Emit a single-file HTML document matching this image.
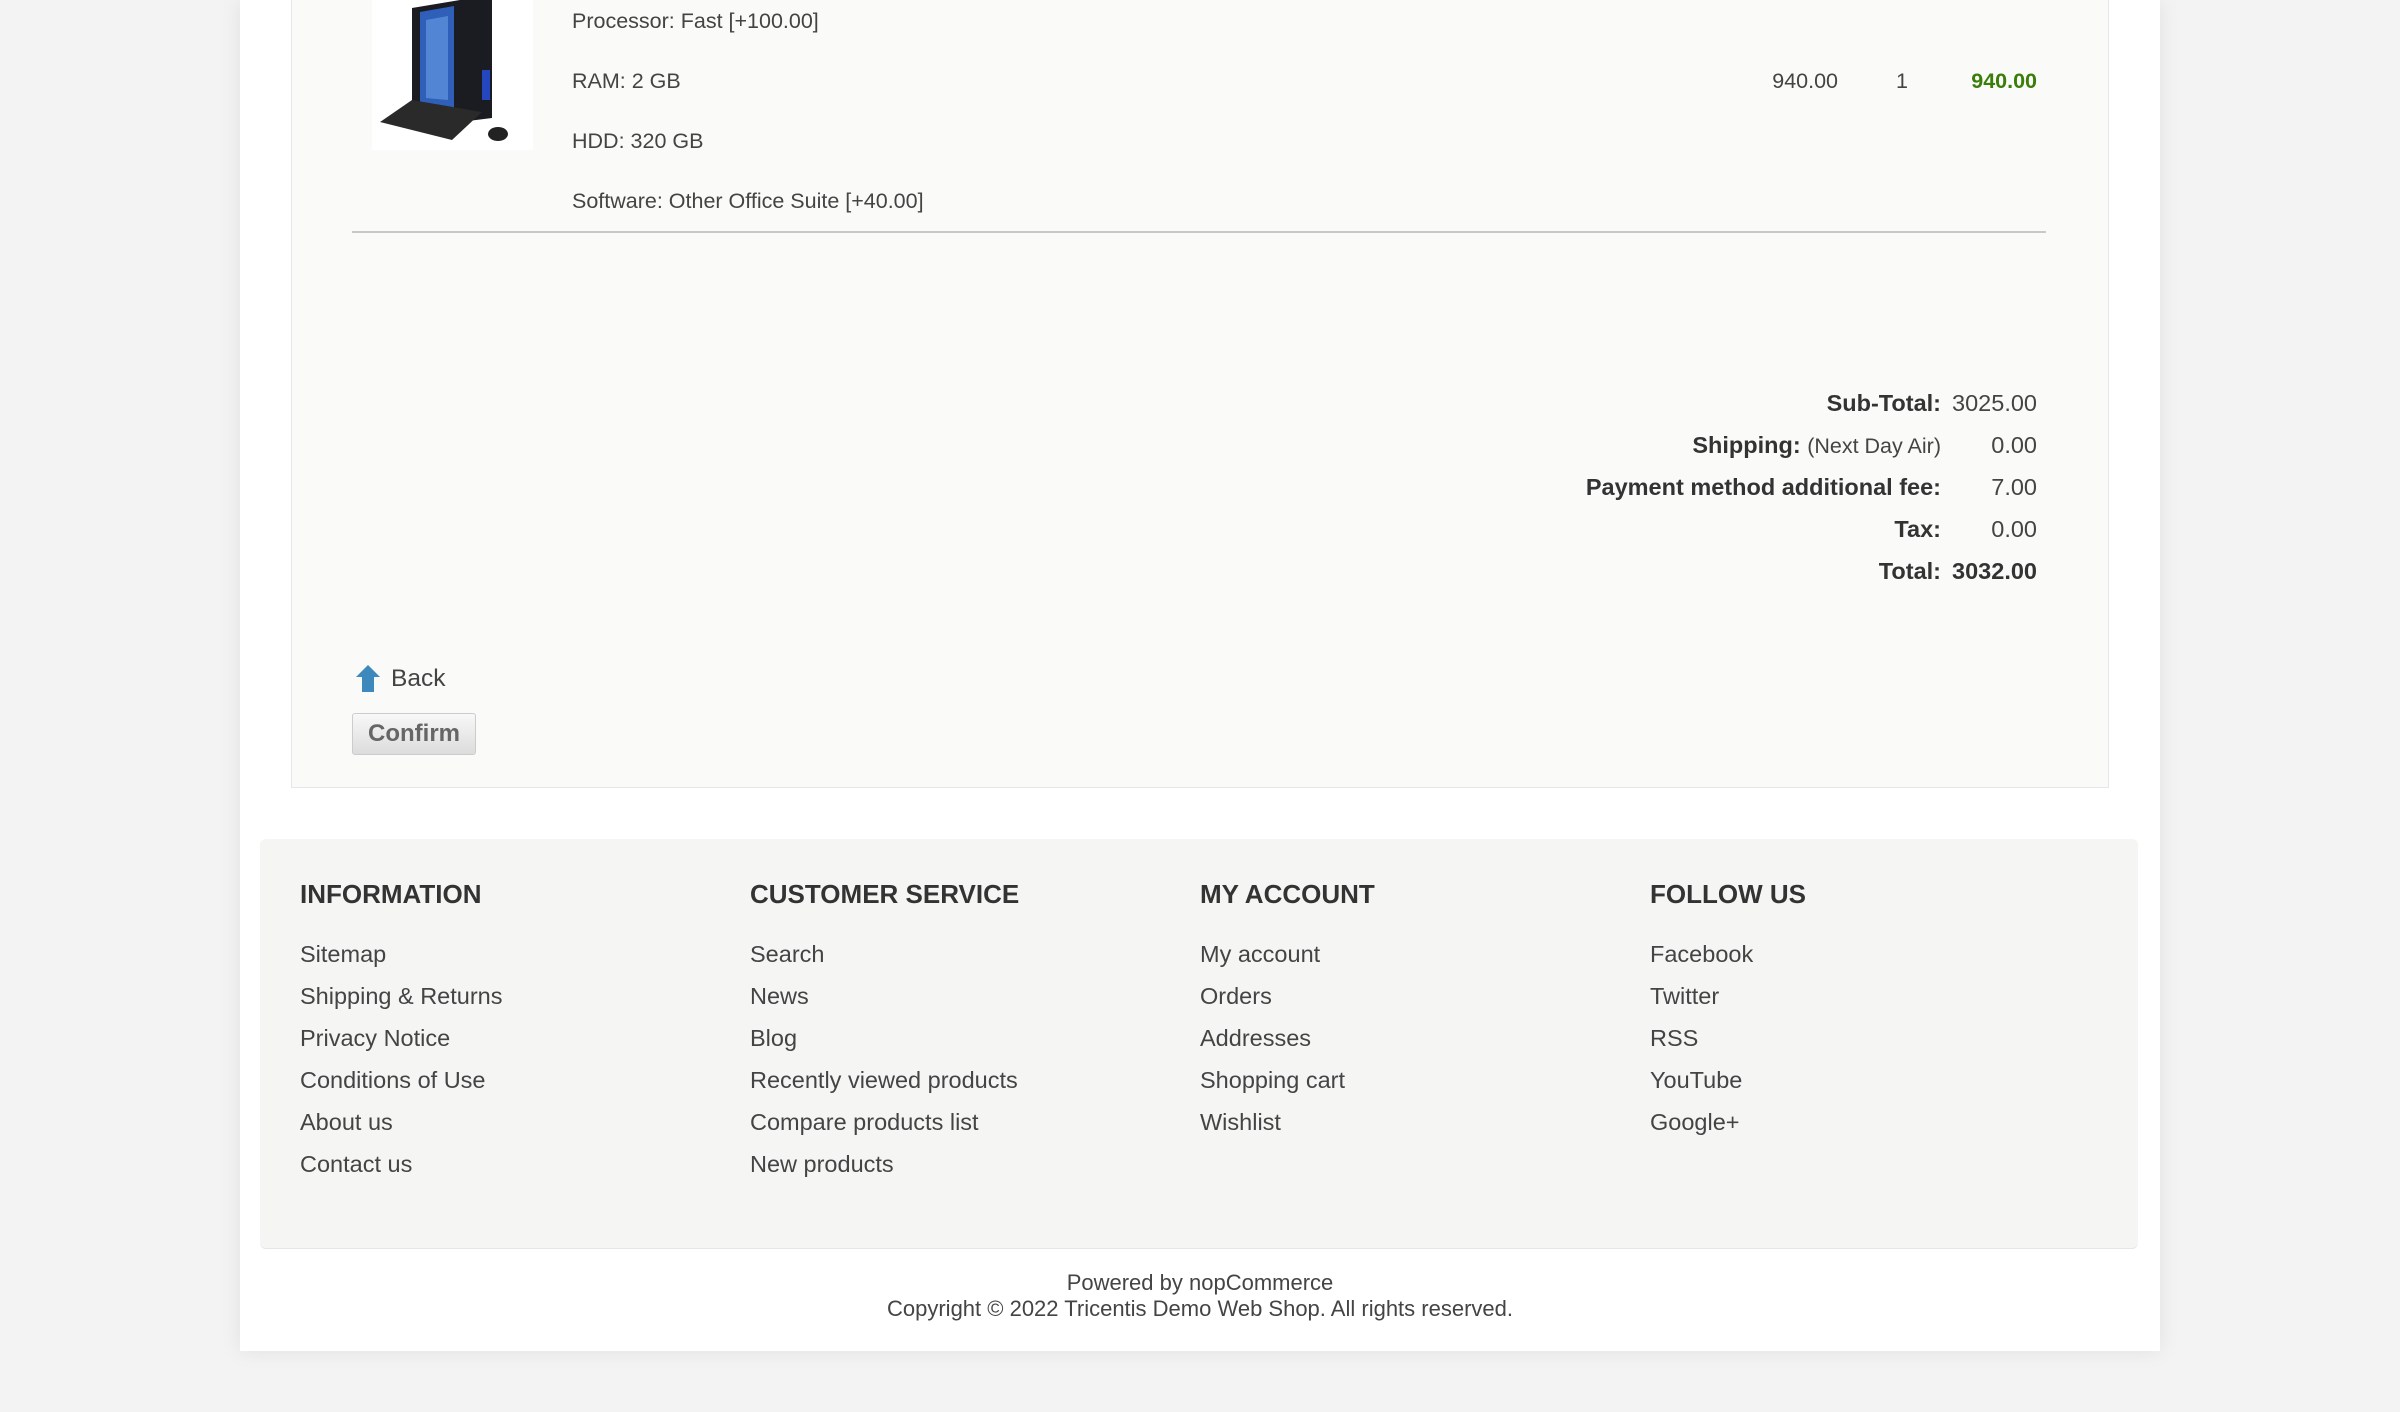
<!DOCTYPE html>
<html><head><meta charset="utf-8"><style>
*{margin:0;padding:0;box-sizing:border-box}
body{width:2400px;height:1412px;background:#f3f3f3;font-family:"Liberation Sans",Arial,sans-serif;color:#444;position:relative;overflow:hidden}
.a{position:absolute;white-space:nowrap}
#page{position:absolute;left:240px;top:0;width:1920px;height:1351px;background:#fff;box-shadow:0 0 20px rgba(0,0,0,.08)}
#box{position:absolute;left:291px;top:-2px;width:1818px;height:790px;background:#fafaf8;border:1px solid #e6e6e6}
.t{font-size:21.5px;line-height:24px}
.r{text-align:right}
.v{font-size:23.5px;line-height:26px}
#foot{position:absolute;left:260px;top:839px;width:1878px;height:410px;background:#f5f5f4;border-radius:6px;border-bottom:1px solid #e5e5e5}
.h{font-size:26px;font-weight:bold;color:#333}
.l{font-size:23.5px;line-height:42px;color:#444}
</style></head><body>
<div id="page"></div>
<div id="box"></div>
<div class="a" style="left:372px;top:0;width:161px;height:150px;background:#fff">
<svg width="161" height="150" viewBox="0 0 161 150">
<polygon points="40,8 88,0 120,0 120,118 88,122 40,112" fill="#1b1b22"/>
<polygon points="48,12 82,6 82,110 48,106" fill="#2f5fb8"/>
<polygon points="54,20 76,16 76,100 54,98" fill="#6aa0e6" opacity=".6"/>
<rect x="110" y="70" width="8" height="30" fill="#2447c0"/>
<polygon points="8,122 40,100 110,112 80,140" fill="#2a2a2a"/>
<ellipse cx="126" cy="134" rx="10" ry="7" fill="#222"/>
</svg></div>
<div class="a t" style="left:572px;top:9px">Processor: Fast [+100.00]</div>
<div class="a t" style="left:572px;top:69px">RAM: 2 GB</div>
<div class="a t" style="left:572px;top:129px">HDD: 320 GB</div>
<div class="a t" style="left:572px;top:189px">Software: Other Office Suite [+40.00]</div>
<div class="a t r" style="right:562px;top:69px">940.00</div>
<div class="a t" style="left:1896px;top:69px">1</div>
<div class="a t r" style="right:363px;top:69px;color:#3b7d0a;font-weight:bold">940.00</div>
<div class="a" style="left:352px;top:231px;width:1694px;height:2px;background:#c8c8c8"></div>
<div class="a v r" style="right:459px;top:390px;color:#333;font-weight:bold">Sub-Total:</div>
<div class="a v r" style="right:363px;top:390px">3025.00</div>
<div class="a v r" style="right:459px;top:432px"><b style="color:#333">Shipping:</b> <span style="font-size:21.5px">(Next Day Air)</span></div>
<div class="a v r" style="right:363px;top:432px">0.00</div>
<div class="a v r" style="right:459px;top:474px;color:#333;font-weight:bold">Payment method additional fee:</div>
<div class="a v r" style="right:363px;top:474px">7.00</div>
<div class="a v r" style="right:459px;top:516px;color:#333;font-weight:bold">Tax:</div>
<div class="a v r" style="right:363px;top:516px">0.00</div>
<div class="a v r" style="right:459px;top:558px;color:#333;font-weight:bold">Total:</div>
<div class="a v r" style="right:363px;top:558px;color:#333;font-weight:bold">3032.00</div>
<svg class="a" style="left:356px;top:665px" width="24" height="28" viewBox="0 0 24 28"><polygon points="12,0 24,12 18,12 18,27 6,27 6,12 0,12" fill="#3d88bd"/></svg>
<div class="a" style="left:391px;top:665px;font-size:24.5px;color:#444">Back</div>
<div class="a" style="left:352px;top:713px;width:124px;height:42px;border:1px solid #ccc;border-radius:3px;background:linear-gradient(#f8f8f8,#dcdcdc);font-size:24px;font-weight:bold;color:#666;text-align:center;line-height:40px">Confirm</div>
<div id="foot"></div>
<div class="a h" style="left:300px;top:879px">INFORMATION</div>
<div class="a h" style="left:750px;top:879px">CUSTOMER SERVICE</div>
<div class="a h" style="left:1200px;top:879px">MY ACCOUNT</div>
<div class="a h" style="left:1650px;top:879px">FOLLOW US</div>
<div class="a l" style="left:300px;top:933px">Sitemap<br>Shipping &amp; Returns<br>Privacy Notice<br>Conditions of Use<br>About us<br>Contact us</div>
<div class="a l" style="left:750px;top:933px">Search<br>News<br>Blog<br>Recently viewed products<br>Compare products list<br>New products</div>
<div class="a l" style="left:1200px;top:933px">My account<br>Orders<br>Addresses<br>Shopping cart<br>Wishlist</div>
<div class="a l" style="left:1650px;top:933px">Facebook<br>Twitter<br>RSS<br>YouTube<br>Google+</div>
<div class="a" style="left:0;width:2400px;top:1270px;text-align:center;font-size:22px;line-height:26px;color:#444">Powered by nopCommerce<br>Copyright © 2022 Tricentis Demo Web Shop. All rights reserved.</div>
</body></html>
